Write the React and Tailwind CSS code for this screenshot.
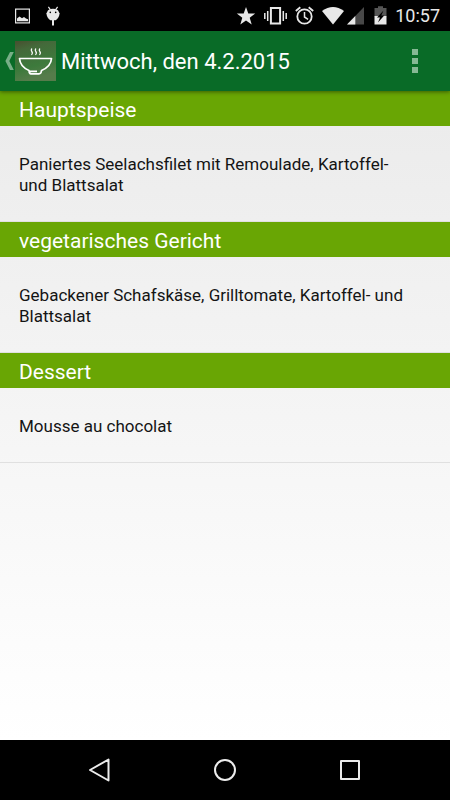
const meals = [
  { course: 'Hauptspeise', dish: 'Paniertes Seelachsfilet mit Remoulade, Kartoffel- und Blattsalat' },
  { course: 'vegetarisches Gericht', dish: 'Gebackener Schafskäse, Grilltomate, Kartoffel- und Blattsalat' },
  { course: 'Dessert', dish: 'Mousse au chocolat' },
];

function StatusBar() {
  return (
    <div className="flex h-[31px] shrink-0 items-center justify-between bg-black pr-[10px] pl-[15px] text-[#e8e8e8]">
      <div className="flex items-center gap-4">
        <svg width="15" height="16" viewBox="0 0 15 16" aria-hidden="true">
          <rect x="0.6" y="1.1" width="13.8" height="13.8" fill="none" stroke="currentColor" strokeWidth="1.2" />
          <path d="M2 13.2V10.5L4.5 8.5 7 10.3 9 9l2 1.500 2 .7v2z" fill="currentColor" />
        </svg>
        <svg width="14" height="20" viewBox="0 0 14 20" aria-hidden="true">
          <path d="M2.400 .8 4.300 3.600M11.600 .8 9.700 3.600" stroke="currentColor" strokeWidth="1.200" />
          <path d="M2 4.200Q7 1.400 12 4.200L13.600 7.500Q13 12 9.700 14.200H4.300Q1 12 .4 7.500z" fill="currentColor" />
          <circle cx="4.300" cy="6.400" r=".8" fill="#000" />
          <circle cx="9.700" cy="6.400" r=".8" fill="#000" />
          <path d="M7 14v5.500" stroke="currentColor" strokeWidth="2" />
        </svg>
      </div>
      <div className="flex items-center gap-2">
        <svg width="20" height="20" viewBox="0 0 20 20" aria-hidden="true">
          <path d="m10 .9 2.300 6.500 6.900.2-5.500 4.200 2 6.700-5.700-4-5.700 4 2-6.700L.8 7.600l6.900-.2z" fill="currentColor" />
        </svg>
        <svg width="23" height="20" viewBox="0 0 23 20" aria-hidden="true">
          <rect x="6.900" y="2" width="9.200" height="15.500" fill="none" stroke="currentColor" strokeWidth="2" />
          <path d="M3.700 5v10M.8 7v6M19.300 5v10M22.200 7v6" stroke="currentColor" strokeWidth="1.500" />
        </svg>
        <svg width="19" height="20" viewBox="0 0 19 20" fill="none" stroke="currentColor" aria-hidden="true">
          <circle cx="9.500" cy="10.500" r="7.200" strokeWidth="1.800" />
          <path d="M9.500 6v5l3.600 2.300" strokeWidth="1.500" />
          <path d="M.8 5 5.300 1.300M18.200 5 13.700 1.300" strokeWidth="1.800" />
        </svg>
        <div className="flex items-center gap-[3px]">
          <svg width="22" height="20" viewBox="0 0 22 20" aria-hidden="true">
            <path d="M0 5Q11-2.800 22 5L11 18.500z" fill="currentColor" />
          </svg>
          <svg width="17" height="20" viewBox="0 0 17 20" aria-hidden="true">
            <path d="M17 1v17.500H0z" fill="#484848" />
            <path d="M8.300 10v8.500H0z" fill="currentColor" />
          </svg>
        </div>
        <div className="flex items-center gap-2 pl-[2px]">
          <svg width="13" height="20" viewBox="0 0 13 20" aria-hidden="true">
            <path d="M.5 2H4V.2h5V2h3.500v8.500H.5z" fill="#555" />
            <path d="M.5 10h12v8.500H.5z" fill="currentColor" />
            <path d="M9.500 4.500 3 11.500h3L4 16.500l6.200-7H7.300z" fill="#000" />
          </svg>
          <span className="pt-px text-lg leading-5">10:57</span>
        </div>
      </div>
    </div>
  );
}

function ActionBar() {
  return (
    <header className="relative flex h-[60px] shrink-0 items-center bg-[#096b27] pr-6 text-white shadow-[0_1px_4px_rgba(0,0,0,0.45)]">
      <button type="button" aria-label="Zurück" className="flex items-center pl-[5px]">
        <svg width="10" height="20" viewBox="0 0 10 20" aria-hidden="true">
          <path d="M5 1h3.800L4.300 10l4.500 9H5L.4 10z" fill="#78ae87" />
        </svg>
        <svg width="41" height="40" viewBox="0 0 41 40" aria-hidden="true">
          <defs>
            <linearGradient id="tile" x1="0" y1="0" x2="0.3" y2="1">
              <stop offset="0" stopColor="#474f2f" />
              <stop offset="0.25" stopColor="#44693a" />
              <stop offset="0.7" stopColor="#3d7a3c" />
              <stop offset="1" stopColor="#567c4b" />
            </linearGradient>
          </defs>
          <rect width="41" height="40" fill="url(#tile)" />
          <g fill="none" stroke="#fff">
            <path d="M4.500 17.500h32Q36 25.500 26.500 29.500q-.2 3.300-2.500 3.300h-8q-2 0-2-3.300Q5 25.500 4.500 17.500zM14 30.300h8" strokeWidth="1.700" strokeLinejoin="round" />
            <path d="M17 7.500q-1.500 1.500-.2 3t-.3 3.500M21 7.500q-1.500 1.500-.2 3t-.3 3.500M25 7.500q-1.500 1.500-.2 3t-.3 3.500" strokeWidth="1.200" />
          </g>
        </svg>
      </button>
      <h1 className="min-w-0 flex-1 truncate pt-[2px] pl-[5px] text-[22px] leading-8">Mittwoch, den 4.2.2015</h1>
      <button type="button" aria-label="Weitere Optionen" className="flex w-[22px] flex-col items-center gap-[3px]">
        <span className="size-[6px] bg-[#86b894]" />
        <span className="size-[6px] bg-[#86b894]" />
        <span className="size-[6px] bg-[#86b894]" />
      </button>
    </header>
  );
}

function NavigationBar() {
  return (
    <nav className="flex h-[60px] shrink-0 items-center justify-center gap-[101px] bg-black text-[#ececec]">
      <button type="button" aria-label="Zurück">
        <svg width="24" height="24" viewBox="0 0 24 24" fill="none" stroke="currentColor" strokeWidth="2" strokeLinejoin="round" aria-hidden="true">
          <path d="M20.500 1.500v21L2 12z" />
        </svg>
      </button>
      <button type="button" aria-label="Startseite">
        <svg width="24" height="24" viewBox="0 0 24 24" fill="none" stroke="currentColor" strokeWidth="2" aria-hidden="true">
          <circle cx="12" cy="12" r="10" />
        </svg>
      </button>
      <button type="button" aria-label="Übersicht">
        <svg width="24" height="24" viewBox="0 0 24 24" fill="none" stroke="currentColor" strokeWidth="2" strokeLinejoin="round" aria-hidden="true">
          <rect x="3" y="3" width="18" height="18" />
        </svg>
      </button>
    </nav>
  );
}

export default function App() {
  return (
    <div className="flex min-h-screen flex-col bg-black font-[Roboto,'Noto_Sans',sans-serif]">
      <StatusBar />
      <ActionBar />
      <main className="flex-1 bg-linear-to-b from-[#ebebeb] to-white">
        {meals.map((meal) => (
          <section key={meal.course}>
            <h2 className="h-[35px] bg-[#69a604] px-[19px] text-[21px] leading-[39px] text-white">{meal.course}</h2>
            <p className="border-b border-[#e0e0e0] pt-7 pr-[38px] pb-[25px] pl-[19px] text-[17px] leading-[21px] text-[#141414]">{meal.dish}</p>
          </section>
        ))}
      </main>
      <NavigationBar />
    </div>
  );
}
